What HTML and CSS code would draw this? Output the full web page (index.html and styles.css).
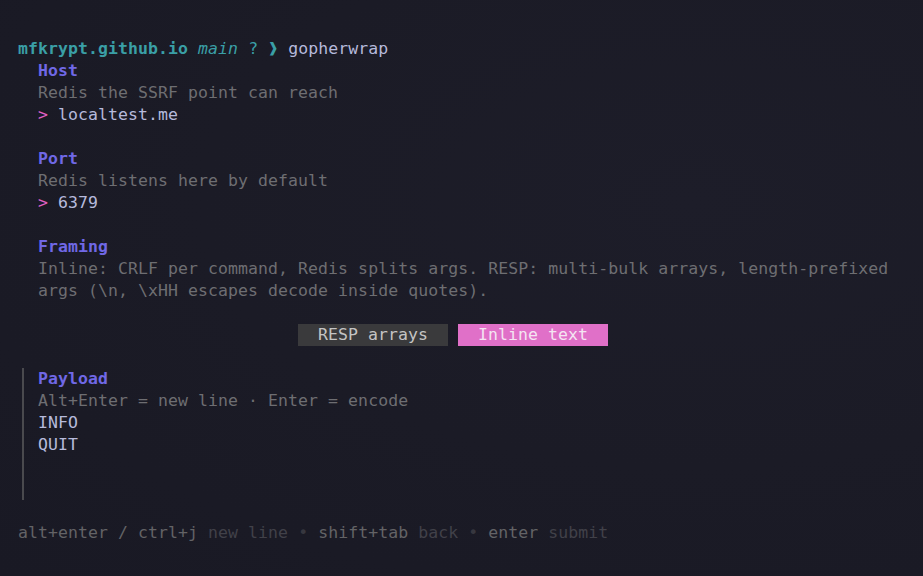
FILE: index.html
```html
<!DOCTYPE html>
<html>
<head>
<meta charset="utf-8">
<link rel="stylesheet" href="styles.css">
</head>
<body>
<div class="term">
  <div class="line"><span class="host">mfkrypt.github.io</span> <span class="branch">main</span> <span class="teal">?</span> <span class="chev">❱</span> <span class="cmd">gopherwrap</span></div>
  <div class="field">
    <div class="line title">Host</div>
    <div class="line desc">Redis the SSRF point can reach</div>
    <div class="line"><span class="caret">&gt;</span> <span class="val">localtest.me</span></div>
  </div>
  <div class="line">&nbsp;</div>
  <div class="field">
    <div class="line title">Port</div>
    <div class="line desc">Redis listens here by default</div>
    <div class="line"><span class="caret">&gt;</span> <span class="val">6379</span></div>
  </div>
  <div class="line">&nbsp;</div>
  <div class="field">
    <div class="line title">Framing</div>
    <div class="line desc">Inline: CRLF per command, Redis splits args. RESP: multi-bulk arrays, length-prefixed</div>
    <div class="line desc">args (\n, \xHH escapes decode inside quotes).</div>
  </div>
  <div class="line">&nbsp;</div>
  <div class="toggles">
    <span class="opt">RESP arrays</span>
    <span class="opt on">Inline text</span>
  </div>
  <div class="line">&nbsp;</div>
  <div class="area">
    <div class="line title">Payload</div>
    <div class="line desc">Alt+Enter = new line · Enter = encode</div>
    <div class="line val">INFO</div>
    <div class="line val">QUIT</div>
    <div class="line">&nbsp;</div>
    <div class="line">&nbsp;</div>
  </div>
  <div class="line">&nbsp;</div>
  <div class="line help"><span class="key">alt+enter / ctrl+j</span> new line <span class="dot">•</span> <span class="key">shift+tab</span> back <span class="dot">•</span> <span class="key">enter</span> submit</div>
</div>
</body>
</html>
```
FILE: styles.css
```css
html, body {
  margin: 0;
  padding: 0;
}
body {
  width: 923px;
  height: 576px;
  overflow: hidden;
  background: radial-gradient(ellipse at 75% 35%, #1d1d29 0%, #1b1b26 50%, #191924 100%);
  font-family: "DejaVu Sans Mono", "Liberation Mono", monospace;
  font-size: 16.5px;
  letter-spacing: 0.07px;
  color: #b6badc;
}
.term {
  padding: 38px 0 0 18px;
}
.line {
  height: 22px;
  line-height: 22px;
  white-space: pre;
}
.field {
  padding-left: 20px;
}
.host {
  color: #3a9fa6;
  font-weight: bold;
}
.branch {
  color: #3a9fa6;
  font-style: italic;
}
.teal {
  color: #3a9fa6;
}
.chev {
  color: #3a9fa6;
  font-weight: bold;
}
.cmd {
  color: #b6badc;
}
.title {
  color: #7068e6;
  font-weight: bold;
}
.desc {
  color: #6e6e72;
}
.caret {
  color: #e060c4;
}
.val {
  color: #b6badc;
}
.toggles {
  display: flex;
  gap: 10px;
  padding-left: 280px;
  height: 22px;
}
.opt {
  width: 150px;
  height: 22px;
  line-height: 22px;
  text-align: center;
  background: #3a3a3c;
  color: #c4c4c4;
}
.opt.on {
  background: #e070c8;
  color: #f4e4f2;
}
.area {
  margin-left: 4px;
  padding-left: 14px;
  border-left: 2px solid #4a4a4e;
}
.help {
  color: #414149;
}
.key {
  color: #636366;
}
.dot {
  color: #37373f;
}
```
